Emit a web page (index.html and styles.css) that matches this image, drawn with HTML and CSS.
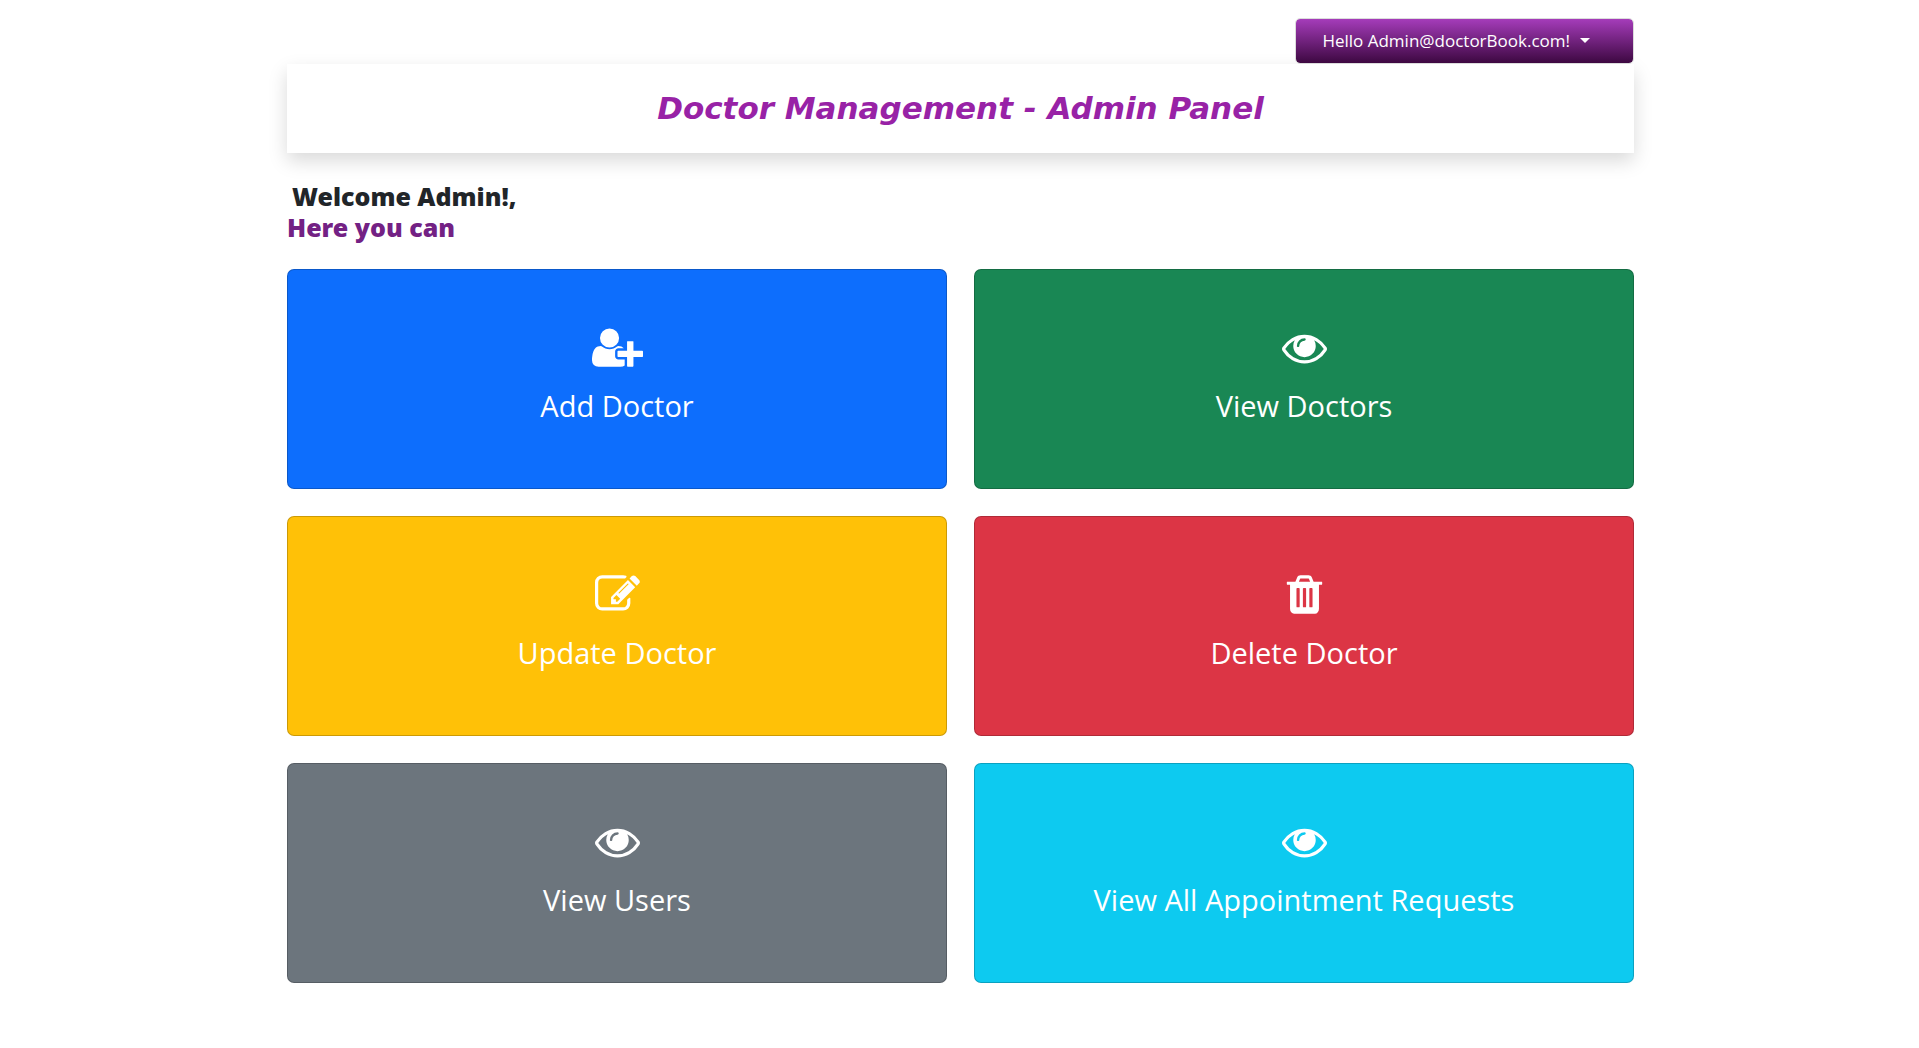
FILE: index.html
```html
<!DOCTYPE html>
<html lang="en">
<head>
<meta charset="utf-8">
<meta name="viewport" content="width=device-width, initial-scale=1">
<title>Doctor Management - Admin Panel</title>
<link rel="stylesheet" href="styles.css">
</head>
<body>
<svg class="sprite" aria-hidden="true">
  <symbol id="eye" viewBox="0 0 1792 1792"><path d="M1664 960q-152-236-381-353 61 104 61 225 0 185-131.500 316.500t-316.500 131.500-316.500-131.500-131.500-316.500q0-121 61-225-229 117-381 353 133 205 333.500 326.500t434.500 121.500 434.500-121.500 333.500-326.500zm-720-384q0-20-14-34t-34-14q-125 0-214.500 89.500t-89.500 214.500q0 20 14 34t34 14 34-14 14-34q0-86 61-147t147-61q20 0 34-14t14-34zm848 384q0 34-20 69-140 230-376.500 368.500t-499.500 138.500-499.500-139-376.500-368q-20-35-20-69t20-69q140-229 376.500-368t499.500-139 499.500 139 376.500 368q20 35 20 69z"/></symbol>
</svg>
<div class="page">
  <nav class="topbar">
    <button class="user-menu" type="button" aria-haspopup="true">Hello Admin@doctorBook.com!<span class="caret"></span></button>
  </nav>
  <header class="banner">
    <h1 class="banner-title">Doctor Management - Admin Panel</h1>
  </header>
  <main>
    <h2 class="welcome"><span class="welcome-name">Welcome Admin!,</span><span class="welcome-lead">Here you can</span></h2>
    <div class="cards">
      <a class="card card-primary" href="#add-doctor">
        <svg class="icon icon-wide" viewBox="0 0 2048 1792" aria-hidden="true"><path d="M704 896q-159 0-271.500-112.500t-112.500-271.500 112.500-271.500 271.500-112.500 271.500 112.500 112.500 271.500-112.500 271.500-271.500 112.500zm960 128h352q13 0 22.500 9.500t9.500 22.500v192q0 13-9.500 22.500t-22.500 9.500h-352v352q0 13-9.500 22.500t-22.500 9.500h-192q-13 0-22.500-9.500t-9.500-22.500v-352h-352q-13 0-22.500-9.500t-9.500-22.500v-192q0-13 9.500-22.500t22.500-9.500h352v-352q0-13 9.500-22.500t22.500-9.500h192q13 0 22.500 9.500t9.500 22.500v352zm-736 224q0 52 38 90t90 38h256v238q-68 50-171 50h-874q-121 0-194-69t-73-190q0-53 3.500-103.500t14-109 26.500-108.500 43-97.500 62-81 85.500-53.500 111.500-20q19 0 39 17 79 61 154.500 91.500t164.500 30.500 164.500-30.500 154.500-91.500q20-17 39-17 132 0 217 96h-223q-52 0-90 38t-38 90v192z"/></svg>
        <span class="card-label">Add Doctor</span>
      </a>
      <a class="card card-success" href="#view-doctors">
        <svg class="icon" aria-hidden="true"><use href="#eye"/></svg>
        <span class="card-label">View Doctors</span>
      </a>
      <a class="card card-warning" href="#update-doctor">
        <svg class="icon" viewBox="0 0 1792 1792" aria-hidden="true"><path d="M888 1184l116-116-152-152-116 116v56h96v96h56zm440-720q-16-16-33 1l-350 350q-17 17-1 33t33-1l350-350q17-17 1-33zm80 594v190q0 119-84.500 203.500t-203.500 84.500h-832q-119 0-203.500-84.500t-84.500-203.500v-832q0-119 84.500-203.500t203.500-84.500h832q63 0 117 25 15 7 18 23 3 17-9 29l-49 49q-14 14-32 8-23-6-45-6h-832q-66 0-113 47t-47 113v832q0 66 47 113t113 47h832q66 0 113-47t47-113v-126q0-13 9-22l64-64q15-15 35-7t20 29zm-96-738l288 288-672 672h-288v-288zm444 132l-92 92-288-288 92-92q28-28 68-28t68 28l152 152q28 28 28 68t-28 68z"/></svg>
        <span class="card-label">Update Doctor</span>
      </a>
      <a class="card card-danger" href="#delete-doctor">
        <svg class="icon" viewBox="0 0 1792 1792" aria-hidden="true"><path d="M704 1376v-704q0-14-9-23t-23-9h-64q-14 0-23 9t-9 23v704q0 14 9 23t23 9h64q14 0 23-9t9-23zm256 0v-704q0-14-9-23t-23-9h-64q-14 0-23 9t-9 23v704q0 14 9 23t23 9h64q14 0 23-9t9-23zm256 0v-704q0-14-9-23t-23-9h-64q-14 0-23 9t-9 23v704q0 14 9 23t23 9h64q14 0 23-9t9-23zm-544-992h448l-48-117q-7-9-17-11h-317q-10 2-17 11zm928 32v64q0 14-9 23t-23 9h-96v948q0 83-47 143.500t-113 60.500h-832q-66 0-113-58.500t-47-141.500v-952h-96q-14 0-23-9t-9-23v-64q0-14 9-23t23-9h309l70-167q15-37 54-63t79-26h320q40 0 79 26t54 63l70 167h309q14 0 23 9t9 23z"/></svg>
        <span class="card-label">Delete Doctor</span>
      </a>
      <a class="card card-secondary" href="#view-users">
        <svg class="icon" aria-hidden="true"><use href="#eye"/></svg>
        <span class="card-label">View Users</span>
      </a>
      <a class="card card-info" href="#appointments">
        <svg class="icon" aria-hidden="true"><use href="#eye"/></svg>
        <span class="card-label">View All Appointment Requests</span>
      </a>
    </div>
  </main>
</div>
</body>
</html>
```
FILE: styles.css
```css
* {
  box-sizing: border-box;
}

body {
  margin: 0;
  background: #fff;
  color: #212529;
  font-family: "Segoe UI", "Open Sans", "Noto Sans", sans-serif;
}

.sprite {
  display: none;
}

.page {
  max-width: 1349px;
  margin: 0 auto;
  padding: 18px 0 24px 2px;
}

.topbar {
  display: flex;
  justify-content: flex-end;
}

.user-menu {
  display: flex;
  align-items: center;
  gap: 10px;
  height: 46px;
  padding: 0 43px 2px 26px;
  border: 1px solid #dcdcdc;
  border-radius: 5px;
  background: linear-gradient(#a53cba, #3d0841);
  background-clip: padding-box;
  color: #fff;
  font-family: inherit;
  font-size: 17px;
  cursor: pointer;
}

.caret {
  border-top: 5px solid #fff;
  border-right: 5px solid transparent;
  border-left: 5px solid transparent;
}

.banner {
  padding: 24px;
  background: #fff;
  box-shadow: 0 8px 18px rgba(0, 0, 0, 0.15);
  text-align: center;
}

.banner-title {
  margin: 0;
  color: #9822a6;
  font: italic bold 31px/41px Verdana, "DejaVu Sans", sans-serif;
}

.welcome {
  display: flex;
  flex-direction: column;
  margin: 28px 0 26px;
  font-family: "Noto Sans", sans-serif;
  font-size: 25px;
  font-weight: 900;
  line-height: 31px;
}

.welcome-name {
  padding-left: 5px;
}

.welcome-lead {
  color: #732184;
}

.cards {
  display: grid;
  grid-template-columns: repeat(auto-fit, minmax(min(100%, 480px), 1fr));
  gap: 27px;
}

.card {
  display: flex;
  flex-direction: column;
  align-items: center;
  gap: 11px;
  padding: 55px 16px 58px;
  border: 1px solid rgba(0, 0, 0, 0.2);
  border-radius: 7px;
  color: #fff;
  text-decoration: none;
}

.icon {
  width: 45px;
  height: 45px;
  fill: currentColor;
}

.icon-wide {
  width: 51px;
}

.card-label {
  font-size: 29px;
  line-height: 49px;
}

.card-primary {
  background-color: #0d6efd;
}

.card-success {
  background-color: #198754;
}

.card-warning {
  background-color: #ffc107;
}

.card-danger {
  background-color: #dc3545;
}

.card-secondary {
  background-color: #6c757d;
}

.card-info {
  background-color: #0dcaf0;
}
```
